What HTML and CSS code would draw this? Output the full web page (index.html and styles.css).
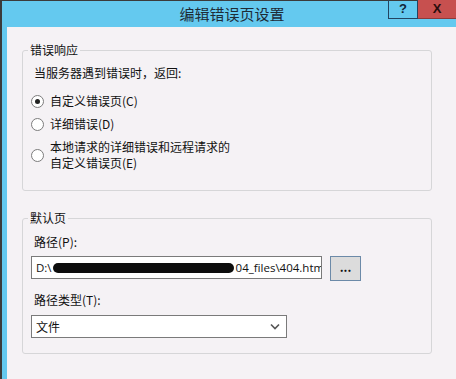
FILE: index.html
```html
<!DOCTYPE html>
<html lang="zh-CN">

<head>
    <meta charset="UTF-8">
    <title>编辑错误页设置</title>
    <link rel="stylesheet" href="styles.css">
</head>

<body>
    <div class="window">
        <div class="titlebar">
            <div class="title">编辑错误页设置</div>
            <div class="btn-help">?</div>
            <div class="btn-close">X</div>
        </div>
        <div class="content">
            <fieldset class="group">
                <legend>错误响应</legend>
                <p class="intro">当服务器遇到错误时，返回:</p>
                <div class="option">
                    <span class="radio checked"></span>
                    <span>自定义错误页(C)</span>
                </div>
                <div class="option">
                    <span class="radio"></span>
                    <span>详细错误(D)</span>
                </div>
                <div class="option">
                    <span class="radio"></span>
                    <span>本地请求的详细错误和远程请求的<br>自定义错误页(E)</span>
                </div>
            </fieldset>

            <fieldset class="group group-default">
                <legend>默认页</legend>
                <p class="label">路径(P):</p>
                <div class="path-row">
                    <div class="textbox">D:\<span class="blot"></span>04_files\404.htm</div>
                    <div class="browse">...</div>
                </div>
                <p class="label label-type">路径类型(T):</p>
                <div class="select">
                    <span>文件</span>
                    <svg width="10" height="7" viewBox="0 0 10 7">
                        <path d="M1 1.5 L5 5.5 L9 1.5" fill="none" stroke="#555" stroke-width="1.6"/>
                    </svg>
                </div>
            </fieldset>
        </div>
    </div>
</body>

</html>
```

FILE: styles.css
```css
body {
    margin: 0;
    width: 456px;
    height: 379px;
    overflow: hidden;
    font-family: "Noto Sans CJK SC", "Noto Sans", sans-serif;
    font-size: 12px;
    color: #111;
    background-color: #3b3b3b;
}

.window {
    margin-top: 1px;
    margin-left: 2px;
    height: 378px;
    background-color: #64c9ef;
    display: flex;
    flex-direction: column;
}

.titlebar {
    height: 26px;
    display: flex;
    align-items: flex-start;
}

.title {
    flex: 1;
    padding-left: 74px;
    text-align: center;
    font-size: 15px;
    line-height: 26px;
    color: #1e2b36;
}

.btn-help {
    width: 28px;
    height: 18px;
    margin-top: -1px;
    border: 1px solid #234461;
    border-top: none;
    text-align: center;
    font-family: "Liberation Sans", sans-serif;
    font-weight: bold;
    font-size: 13px;
    line-height: 18px;
    color: #122538;
}

.btn-close {
    width: 38px;
    height: 18px;
    margin-top: -1px;
    background-color: #c7504f;
    border-bottom: 1px solid #8d3a3a;
    text-align: center;
    font-family: "Liberation Sans", sans-serif;
    font-weight: bold;
    font-size: 13px;
    line-height: 18px;
    color: #2a0d0d;
}

.content {
    flex: 1;
    margin-left: 5px;
    background-color: #f5f2f5;
    padding-top: 15px;
}

.group {
    margin: 0 24px 0 15px;
    padding: 7px 0 19px 11px;
    border: 1px solid #d6d6d8;
    border-radius: 3px;
}

.group legend {
    margin-left: -6px;
    padding: 0 2px;
    line-height: 16px;
}

.intro {
    margin: 0;
    line-height: 16px;
}

.option {
    display: flex;
    align-items: center;
    margin-top: 7px;
    line-height: 16px;
}

.intro + .option {
    margin-top: 12px;
}

.radio {
    width: 11px;
    height: 11px;
    margin-left: -3px;
    margin-right: 6px;
    border: 1px solid #7c7c7c;
    border-radius: 50%;
    background: #fff;
    flex-shrink: 0;
    display: flex;
    align-items: center;
    justify-content: center;
}

.radio.checked::after {
    content: "";
    width: 5px;
    height: 5px;
    border-radius: 50%;
    background: #222;
}

.group-default {
    margin-top: 19px;
    padding: 8px 0 15px 8px;
}

.group-default legend {
    margin-left: -3px;
}

.label {
    margin: 0 0 6px 3px;
    line-height: 16px;
}

.label-type {
    margin-top: 11px;
    margin-bottom: 7px;
}

.path-row {
    display: flex;
    align-items: flex-start;
}

.textbox {
    width: 285px;
    height: 21px;
    padding-left: 4px;
    border: 1px solid #7a7a7a;
    background: #fff;
    line-height: 21px;
    white-space: nowrap;
    overflow: hidden;
    font-family: "Open Sans", "Noto Sans CJK SC", sans-serif;
    font-size: 11.5px;
}

.blot {
    display: inline-block;
    width: 181px;
    height: 10px;
    margin: 0 2px 0 1px;
    vertical-align: -1px;
    border-radius: 5px;
    background: #0d0d0d;
}

.browse {
    width: 29px;
    height: 23px;
    margin-left: 8px;
    border: 1px solid #6c8aa8;
    background: #dcdcdc;
    text-align: center;
    line-height: 20px;
    font-weight: bold;
}

.select {
    width: 244px;
    height: 21px;
    padding: 0 6px 0 4px;
    border: 1px solid #7a7a7a;
    background: #fff;
    display: flex;
    align-items: center;
    justify-content: space-between;
    line-height: 21px;
}
```
